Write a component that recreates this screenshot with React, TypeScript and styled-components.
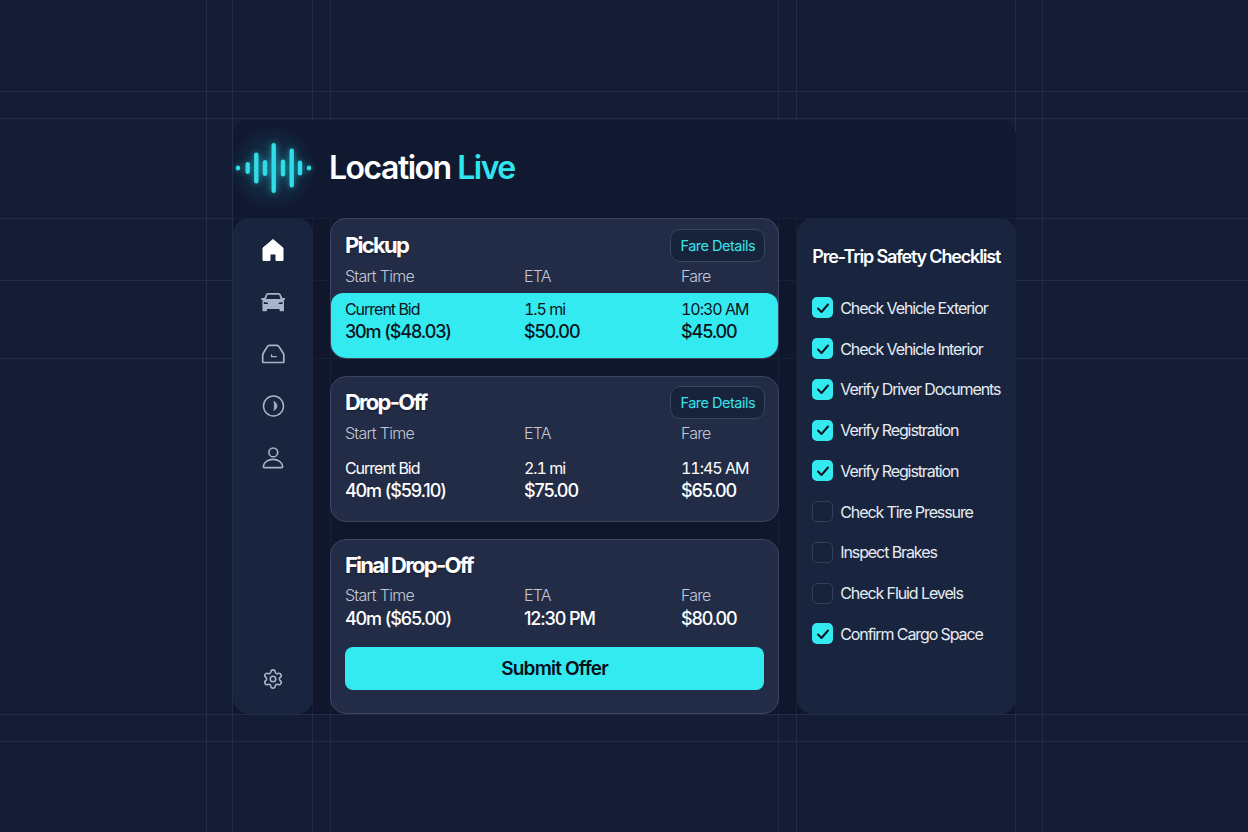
import styled, { createGlobalStyle } from 'styled-components'
import { Settings } from 'lucide-react'

const LINE = '#1f2e49'

const vLine = (x: number) =>
  `linear-gradient(90deg, transparent ${x}px, ${LINE} ${x}px, ${LINE} ${x + 1.5}px, transparent ${x + 1.5}px)`
const hLine = (y: number) =>
  `linear-gradient(180deg, transparent ${y}px, ${LINE} ${y}px, ${LINE} ${y + 1.5}px, transparent ${y + 1.5}px)`

const GlobalStyle = createGlobalStyle`
  html, body {
    margin: 0;
    padding: 0;
    height: 100%;
  }
  body {
    width: 1248px;
    height: 832px;
    overflow: hidden;
    font-family: Inter, "Liberation Sans", sans-serif;
    background-color: #151d34;
    background-image:
      ${[206, 232, 312, 330, 778, 796, 1015, 1042].map(vLine).join(', ')},
      ${[91, 118, 218, 280, 358, 714, 741].map(hLine).join(', ')};
  }
`

const Page = styled.div`
  width: 783px;
  margin-left: 233px;
  padding-top: 120px;
`

const Header = styled.header`
  height: 98px;
  display: flex;
  align-items: center;
  gap: 16px;
  padding-bottom: 2px;
  box-sizing: border-box;
  background: #101930;
  border-radius: 16px 16px 0 0;
`

const LogoWrap = styled.div`
  width: 80px;
  height: 96px;
  display: flex;
  align-items: center;
  justify-content: center;
  background: radial-gradient(circle at 50% 50%, rgba(30, 175, 200, 0.3) 0%, rgba(30, 175, 200, 0.12) 35%, rgba(30, 175, 200, 0) 70%);
`

const Title = styled.h1`
  margin: 0;
  font-size: 32px;
  line-height: 40px;
  font-weight: 600;
  letter-spacing: -1.5px;
  color: #ffffff;
`

const Accent = styled.span`
  color: #2fe6ef;
`

const Body = styled.div`
  display: flex;
  align-items: stretch;
  background: rgba(10, 16, 36, 0.4);
`

const Sidebar = styled.nav`
  width: 80px;
  height: 496px;
  margin-right: 17px;
  padding: 18px 0 21px;
  box-sizing: border-box;
  display: flex;
  flex-direction: column;
  align-items: center;
  background: #19253f;
  border-radius: 16px;
`

const NavItem = styled.div<{ $active?: boolean }>`
  height: 28px;
  width: 28px;
  margin-bottom: 24px;
  display: flex;
  align-items: center;
  justify-content: center;
  color: ${props => (props.$active ? '#ffffff' : '#a9b4c8')};
`

const SettingsItem = styled(NavItem)`
  margin-top: auto;
  margin-bottom: 0;
`

const Cards = styled.div`
  width: 450px;
  display: flex;
  flex-direction: column;
  gap: 17px;
`

const Card = styled.section<{ $height: number }>`
  height: ${props => props.$height}px;
  box-sizing: border-box;
  display: flex;
  flex-direction: column;
  background: #232c46;
  border: 1px solid #3a4660;
  border-radius: 16px;
  overflow: hidden;
`

const CardTop = styled.div<{ $height: number; $pad: number }>`
  height: ${props => props.$height}px;
  padding: ${props => props.$pad}px 13px 0 14px;
  display: flex;
  align-items: flex-start;
  justify-content: space-between;
`

const CardTitle = styled.h2`
  margin: 0;
  font-size: 22px;
  line-height: 32px;
  font-weight: 700;
  letter-spacing: -1.72px;
  color: #ffffff;
  text-shadow: 0 1px 2px rgba(0, 0, 0, 0.45);
`

const FareButton = styled.button`
  width: 95px;
  height: 33px;
  padding: 0;
  font-family: inherit;
  font-size: 14.5px;
  letter-spacing: -0.5px;
  color: #38e3ea;
  background: #16233b;
  border: 1px solid #3a4660;
  border-radius: 10px;
`

const Row = styled.div`
  display: grid;
  grid-template-columns: 179px 157px 1fr;
  padding-left: 14px;
`

const Label = styled.div`
  font-size: 16px;
  line-height: 22px;
  font-weight: 300;
  letter-spacing: -0.7px;
  color: #c2c8d6;
`

const BidBand = styled.div<{ $lit?: boolean }>`
  flex: 1;
  margin-top: ${props => (props.$lit ? '6px' : '14px')};
  padding-top: ${props => (props.$lit ? '6px' : '0')};
  background: ${props => (props.$lit ? '#33eaf0' : 'transparent')};
  border-radius: ${props => (props.$lit ? '12px' : '0')};
  color: ${props => (props.$lit ? '#0b1522' : '#ffffff')};
`

const SmallValue = styled.div`
  font-size: 16px;
  line-height: 21px;
  letter-spacing: -1px;
  font-variant-numeric: tabular-nums;
`

const BigValue = styled.div`
  font-size: 18px;
  line-height: 24px;
  font-weight: 500;
  letter-spacing: -1.1px;
`

const FinalRow = styled(Row)`
  margin-top: 1px;
  color: #ffffff;
`

const SubmitButton = styled.button`
  height: 43px;
  margin: 16px 14px 0;
  font-family: inherit;
  font-size: 19px;
  font-weight: 600;
  letter-spacing: -0.8px;
  color: #05101c;
  background: #33eaf0;
  border: none;
  border-radius: 8px;
`

const Checklist = styled.aside`
  width: 219px;
  margin-left: 18px;
  padding: 27px 0 0 15px;
  box-sizing: border-box;
  background: #19253f;
  border-radius: 16px;
`

const ChecklistTitle = styled.h3`
  margin: 0 0 18.5px;
  font-size: 18px;
  line-height: 24px;
  font-weight: 600;
  letter-spacing: -1.17px;
  white-space: nowrap;
  color: #ffffff;
`

const CheckList = styled.ul`
  margin: 0;
  padding: 0;
  list-style: none;
`

const CheckRow = styled.li`
  height: 40.75px;
  display: flex;
  align-items: center;
  gap: 7px;
  font-size: 16px;
  letter-spacing: -1.1px;
  color: #e8ecf2;
  white-space: nowrap;
`

const Box = styled.span<{ $on: boolean }>`
  width: 21px;
  height: 21px;
  flex: none;
  box-sizing: border-box;
  display: flex;
  align-items: center;
  justify-content: center;
  background: ${props => (props.$on ? '#33eaf0' : '#182238')};
  border: ${props => (props.$on ? 'none' : '1px solid #333f58')};
  border-radius: 5px;
`

const WaveSvg = styled.svg`
  filter: drop-shadow(0 0 3px rgba(47, 221, 232, 0.55));
`

const Waveform = () => {
  const bars = [
    { x: 5, h: 5 }, { x: 14.7, h: 12 }, { x: 23.3, h: 31 }, { x: 32, h: 16 },
    { x: 40.7, h: 50 }, { x: 50, h: 17 }, { x: 58.7, h: 39 }, { x: 67, h: 15 }, { x: 76, h: 5 },
  ]
  return (
    <WaveSvg width="80" height="60" viewBox="0 0 80 60" fill="none">
      {bars.map(bar => (
        <rect
          key={bar.x}
          x={bar.x - 2.2}
          y={30 - bar.h / 2}
          width="4.4"
          height={bar.h}
          rx="2.2"
          fill="#2fdde8"
        />
      ))}
    </WaveSvg>
  )
}

const HomeIcon = () => (
  <svg width="28" height="28" viewBox="0 0 28 28">
    <path
      d="M14 3.5 L24 12 V24.5 H17 V18 H11 V24.5 H4 V12 Z"
      fill="currentColor"
      stroke="currentColor"
      strokeWidth="1"
      strokeLinejoin="round"
    />
  </svg>
)

const CarIcon = () => (
  <svg width="28" height="28" viewBox="0 0 28 28" fill="currentColor">
    <path
      fillRule="evenodd"
      d="M6.6 7 C7 5.7 7.8 5 9 5 H19.6 C20.8 5 21.6 5.7 22 7 L23.3 10 H25.2 C26.4 10 26.4 12 25.2 12 H24.6 C25 12.8 25 13.4 25 14 V22.5 C25 23 24.6 23.3 24 23.3 H21.5 C21 23.3 20.6 23 20.6 22.5 V21 H8 V22.5 C8 23 7.6 23.3 7 23.3 H4.4 C3.8 23.3 3.4 23 3.4 22.5 V14 C3.4 13.4 3.5 12.8 4 12 H3 C1.8 12 1.8 10 3 10 H5.3 Z M8.5 6.8 L7 11 H21.6 L20.1 6.8 Z M4.8 14 V16 H9 V14.8 Z M23.6 14 L19.6 14.8 V16 H23.6 Z"
    />
  </svg>
)

const TrunkIcon = () => (
  <svg width="28" height="28" viewBox="0 0 28 28" fill="none" stroke="currentColor" strokeWidth="1.7" strokeLinejoin="round" strokeLinecap="round">
    <path d="M4 22.5 C3.8 22.5 3.7 22.3 3.7 22 V15 C3.7 14.3 3.9 13.7 4.4 13 L8.5 6.4 C9 5.6 9.5 5.3 10.3 5.3 H18 C18.8 5.3 19.3 5.6 19.8 6.4 L24.1 13 C24.6 13.7 24.8 14.3 24.8 15 V22 C24.8 22.3 24.7 22.5 24.5 22.5 Z" />
    <path d="M12.6 15 L12.4 16.6 H17.4" strokeWidth="1.3" />
  </svg>
)

const DialIcon = () => (
  <svg width="28" height="28" viewBox="0 0 28 28" fill="none">
    <circle cx="14.5" cy="14" r="10" stroke="currentColor" strokeWidth="1.5" />
    <path d="M14.8 9.2 C17 10.6 18 12.4 18 14 C18 15.6 17 17.4 14.8 18.6 C15.6 15.8 15.6 12.2 14.8 9.2 Z" fill="currentColor" stroke="currentColor" strokeWidth="0.6" strokeLinejoin="round" />
  </svg>
)

const PersonIcon = () => (
  <svg width="28" height="28" viewBox="0 0 28 28" fill="none" stroke="currentColor" strokeWidth="1.6">
    <circle cx="14.3" cy="8.4" r="4.4" />
    <path d="M5.6 23.6 C4.6 23.6 4.2 23 4.4 22 C5 18.4 8.8 15.4 14 15.4 C19.4 15.4 23 18.4 23.6 22 C23.8 23 23.4 23.6 22.4 23.6 Z" strokeLinejoin="round" />
  </svg>
)

const CheckMark = () => (
  <svg width="14" height="14" viewBox="0 0 14 14" fill="none">
    <path d="M2 7.5 L5.5 11 L12 3.5" stroke="#0b1522" strokeWidth="2" strokeLinecap="round" strokeLinejoin="round" />
  </svg>
)

const checks = [
  { label: 'Check Vehicle Exterior', on: true },
  { label: 'Check Vehicle Interior', on: true },
  { label: 'Verify Driver Documents', on: true },
  { label: 'Verify Registration', on: true },
  { label: 'Verify Registration', on: true },
  { label: 'Check Tire Pressure', on: false },
  { label: 'Inspect Brakes', on: false },
  { label: 'Check Fluid Levels', on: false },
  { label: 'Confirm Cargo Space', on: true },
]

const Labels = () => (
  <Row>
    <Label>Start Time</Label>
    <Label>ETA</Label>
    <Label>Fare</Label>
  </Row>
)

const App = () => {
  return (
    <>
      <GlobalStyle />
      <Page>
        <Header>
          <LogoWrap>
            <Waveform />
          </LogoWrap>
          <Title>
            Location <Accent>Live</Accent>
          </Title>
        </Header>
        <Body>
          <Sidebar>
            <NavItem $active><HomeIcon /></NavItem>
            <NavItem><CarIcon /></NavItem>
            <NavItem><TrunkIcon /></NavItem>
            <NavItem><DialIcon /></NavItem>
            <NavItem><PersonIcon /></NavItem>
            <SettingsItem><Settings size={22} strokeWidth={1.7} /></SettingsItem>
          </Sidebar>
          <Cards>
            <Card $height={141}>
              <CardTop $height={36} $pad={10}>
                <CardTitle>Pickup</CardTitle>
                <FareButton>Fare Details</FareButton>
              </CardTop>
              <Labels />
              <BidBand $lit>
                <Row>
                  <SmallValue>Current Bid</SmallValue>
                  <SmallValue>1.5 mi</SmallValue>
                  <SmallValue>10:30 AM</SmallValue>
                  <BigValue>30m ($48.03)</BigValue>
                  <BigValue>$50.00</BigValue>
                  <BigValue>$45.00</BigValue>
                </Row>
              </BidBand>
            </Card>
            <Card $height={146}>
              <CardTop $height={36} $pad={9}>
                <CardTitle>Drop-Off</CardTitle>
                <FareButton>Fare Details</FareButton>
              </CardTop>
              <Labels />
              <BidBand>
                <Row>
                  <SmallValue>Current Bid</SmallValue>
                  <SmallValue>2.1 mi</SmallValue>
                  <SmallValue>11:45 AM</SmallValue>
                  <BigValue>40m ($59.10)</BigValue>
                  <BigValue>$75.00</BigValue>
                  <BigValue>$65.00</BigValue>
                </Row>
              </BidBand>
            </Card>
            <Card $height={175}>
              <CardTop $height={35} $pad={9}>
                <CardTitle>Final Drop-Off</CardTitle>
              </CardTop>
              <Labels />
              <FinalRow>
                <BigValue>40m ($65.00)</BigValue>
                <BigValue>12:30 PM</BigValue>
                <BigValue>$80.00</BigValue>
              </FinalRow>
              <SubmitButton>Submit Offer</SubmitButton>
            </Card>
          </Cards>
          <Checklist>
            <ChecklistTitle>Pre-Trip Safety Checklist</ChecklistTitle>
            <CheckList>
              {checks.map((item, i) => (
                <CheckRow key={i}>
                  <Box $on={item.on}>{item.on && <CheckMark />}</Box>
                  {item.label}
                </CheckRow>
              ))}
            </CheckList>
          </Checklist>
        </Body>
      </Page>
    </>
  )
}

export default App
